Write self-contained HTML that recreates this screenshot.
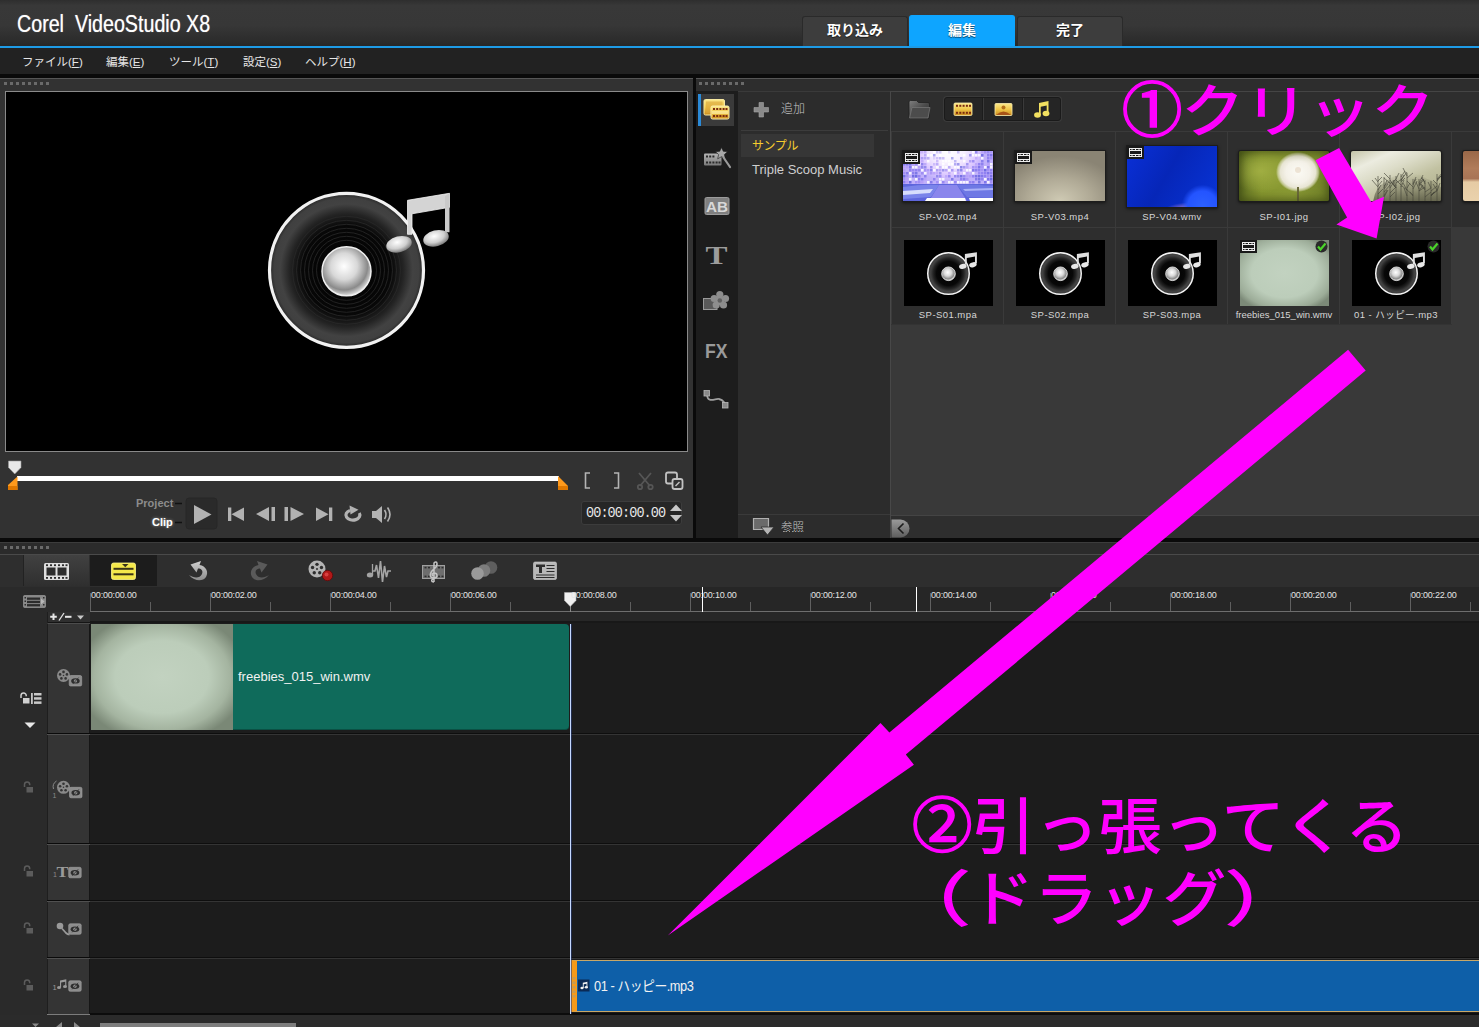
<!DOCTYPE html>
<html lang="ja">
<head>
<meta charset="utf-8">
<title>Corel VideoStudio X8</title>
<style>
*{box-sizing:border-box;margin:0;padding:0}
html,body{width:1479px;height:1027px;overflow:hidden;background:#2b2b2b}
body{font-family:"Liberation Sans","Noto Sans CJK JP",sans-serif;color:#ddd;position:relative}
.abs{position:absolute}
#app{position:absolute;left:0;top:0;width:1479px;height:1027px;overflow:hidden;background:#2b2b2b}
/* title bar */
#title{left:0;top:0;width:1479px;height:46px;background:linear-gradient(#2e2e2e 0,#383838 12%,#373737 55%,#2c2c2c 88%,#272727 100%)}
#title .name{left:17px;top:11px;font-size:23px;color:#fff;white-space:nowrap;transform-origin:0 0;transform:scaleX(.855);letter-spacing:0;text-shadow:0 0 1px rgba(255,255,255,.6)}
#blue{left:0;top:46px;width:1479px;height:2px;background:#1e9be6}
.tab{top:16px;height:30px;width:106px;background:#3d3d3d;color:#fff;font-weight:bold;font-size:14px;text-align:center;line-height:27px;text-shadow:0 1px 1px rgba(0,0,0,.6);border-radius:3px 3px 0 0;border:1px solid #2a2a2a;border-bottom:none}
.tab.on{background:#0ea5ff;border-color:#0ea5ff;top:15px;height:32px;line-height:29px}
#menu{left:0;top:48px;width:1479px;height:26px;background:#222}
#menu span{position:absolute;top:5px;font-size:11.5px;color:#e6e6e6;white-space:nowrap}
#menu u{text-decoration:underline}
#bar1{left:0;top:74px;width:1479px;height:4px;background:#0a0a0a}
/* grip dots */
.grip{height:3px;width:46px;background:repeating-linear-gradient(to right,#6a6a6a 0,#6a6a6a 3px,transparent 3px,transparent 6px)}

/* preview panel */
#pv{left:0;top:78px;width:693px;height:460px;background:#323232;border-top:1px solid #565656}
#pvscreen{left:5px;top:91px;width:683px;height:361px;background:#000;border:1px solid #8a8a8a}
#vdiv{left:693px;top:78px;width:3px;height:460px;background:#0a0a0a}
#bar2{left:0;top:538px;width:1479px;height:4px;background:#0a0a0a}
#scrub{left:17px;top:476px;width:541.500px;height:5px;background:#fff}
.tc{left:581px;top:501px;width:101px;height:24px;background:#262626;border:1px solid #3c3c3c;border-radius:3px}
.tc span{position:absolute;left:4px;top:3px;font-family:"Liberation Mono",monospace;font-size:15px;color:#e8e8e8;letter-spacing:-1px;white-space:nowrap;transform-origin:0 0;transform:scaleX(.9)}
.pl{font-weight:bold;font-size:11px;white-space:nowrap}

/* library */
#lib{left:696px;top:78px;width:783px;height:460px;background:#2d2d2d;border-top:1px solid #565656}
#libicons{left:696px;top:91px;width:42px;height:447px;background:#1d1d1d}
#libsel{left:698px;top:94px;width:36px;height:32px;background:#3a3a3a;border-left:3px solid #2a8ad8}
#folders{left:738px;top:91px;width:152px;height:447px;background:#2c2c2c;border-top:1px solid #3a3a3a}
#fsep{left:741px;top:130px;width:147px;height:1px;background:#3c3c3c}
#frow{left:741px;top:134px;width:133px;height:23px;background:#363636}
.ft{font-size:12.5px;white-space:nowrap;color:#cfcfcf}
#fbot{left:738px;top:514px;width:152px;height:1px;background:#3a3a3a}
#content{left:890px;top:91px;width:589px;height:447px;background:#393939;border-left:1px solid #484848;border-top:1px solid #454545}
#ctool{left:891px;top:92px;width:588px;height:39px;background:#2e2e2e}
#cbot{left:891px;top:515px;width:588px;height:23px;background:#2e2e2e;border-top:1px solid #444}
.cell{position:absolute;width:112px;background:#2e2e2e;border-left:1px solid #3a3a3a;border-top:1px solid #3a3a3a}
.cell .lb{line-height:12px;position:absolute;left:0;width:112px;text-align:center;font-size:9.5px;color:#d6d6d6;white-space:nowrap;letter-spacing:.45px}
.th{position:absolute;left:10.500px;width:90.500px;height:50px;box-shadow:0 0 0 1px #1c1c1c,0 1px 3px 1px rgba(0,0,0,.55);overflow:hidden}
.th2{position:absolute;left:11.500px;top:11.500px;width:89px;height:66.500px;background:#000;overflow:hidden}
.bgrp{left:944px;top:97px;width:117px;height:24px;background:#252525;border:1px solid #1a1a1a;border-radius:3px;box-shadow:0 0 0 1px #3a3a3a}

/* timeline */
#tl{left:0;top:542px;width:1479px;height:485px;background:#2b2b2b;border-top:1px solid #3c3c3c}
#tlline{left:0;top:554px;width:1479px;height:1px;background:#4a4a4a}
#tb1{left:23px;top:555px;width:66px;height:31px;background:linear-gradient(#414141,#2f2f2f);border-left:1px solid #222}
#tb2{left:90px;top:555px;width:67px;height:31px;background:#1c1c1c}
#tbbg{left:0;top:555px;width:1479px;height:32px;background:#2e2e2e}
#ruler{left:90px;top:587px;width:1389px;height:25px;background:#262626;border-bottom:1px solid #6e6e6e}
#rulerL{left:0;top:587px;width:90px;height:25px;background:#2a2a2a}
#ticks{left:90px;top:593px;width:1389px;height:18px;background:repeating-linear-gradient(to right,#606060 0,#606060 1px,transparent 1px,transparent 120px)}
#ticks2{left:150px;top:602px;width:1329px;height:9px;background:repeating-linear-gradient(to right,#5e5e5e 0,#5e5e5e 1px,transparent 1px,transparent 120px)}
.rt{position:absolute;top:590px;font-size:9px;color:#e4e4e4;white-space:nowrap;letter-spacing:-.18px}
#leftcol{left:0;top:612px;width:47px;height:403px;background:#2a2a2a}
#hdcol{left:47px;top:624px;width:43px;height:390px;background:#343434;border-left:1px solid #1e1e1e;border-right:1px solid #161616}
#pm{left:47px;top:612px;width:43px;height:12px;background:#2f2f2f;border-left:1px solid #1e1e1e;border-bottom:1px solid #4c4c4c;box-shadow:inset 0 -1px 0 #151515}
#strip{left:90px;top:612px;width:1389px;height:12px;background:#272727;border-bottom:3px solid #181818}
#tracks{left:90px;top:623px;width:1389px;height:391px;background:#1c1c1c;border-bottom:1px solid #0c0c0c}
.tdiv{position:absolute;left:47px;width:1432px;height:2px;background:linear-gradient(to right,#0a0a0a 0,#0a0a0a 43px,#0e0e0e 43px) top/100% 1px no-repeat,linear-gradient(to right,#505050 0,#505050 43px,#343434 43px) bottom/100% 1px no-repeat}
#bot{left:0;top:1014px;width:1479px;height:13px;background:linear-gradient(to right,#2a2a2a 0,#2a2a2a 47px,#7c7c7c 47px,#7c7c7c 90px,#0c0c0c 90px) top/100% 1px no-repeat,#2b2b2b}
#sb{left:100px;top:1023px;width:196px;height:4px;background:#7e7e7e}
#clipth{left:91px;top:624px;width:142px;height:106px;background:radial-gradient(ellipse 60% 62% at 50% 50%,#c2d2c0 0,#bccdba 55%,#a4b4a0 80%,#7a8876 100%)}
#clipg{left:233px;top:624px;width:336px;height:106px;background:#0f6b5b;border-radius:0 4px 4px 0;border-bottom:1px solid #0a5044}
#clipg span{position:absolute;left:5px;top:45px;font-size:13px;color:#f2f2f2;white-space:nowrap}
#aud{left:571px;top:960px;width:910px;height:52px;background:#0e5fa8;border-top:1px solid #c8a868;border-bottom:1px solid #c8a868;border-left:6px solid #f59a1a}
#aud span{position:absolute;left:17px;top:13.500px;font-size:14px;color:#f2f2f2;white-space:nowrap;letter-spacing:-.5px;transform-origin:0 50%;transform:scaleX(.915)}
#ph{left:570px;top:624px;width:1px;height:390px;background:#c4d8ff;box-shadow:1px 0 0 rgba(40,60,120,.55)}
.mk{position:absolute;top:587px;width:1px;height:25px;background:#fff}

.ann{position:absolute;color:#ff00ff;font-family:"Noto Sans CJK JP",sans-serif;font-weight:500;font-size:61px;white-space:nowrap;line-height:73px}
.circ{position:absolute;width:51px;height:51px;border-radius:50%;overflow:hidden}
.circ span{position:absolute;left:-10.800px;top:-15.900px;font-size:72px;line-height:73px;color:#ff00ff;font-weight:500;font-family:"Noto Sans CJK JP",sans-serif;white-space:nowrap}
</style>
</head>
<body>
<div id="app">
<!-- TITLE -->
<div id="title" class="abs"><div class="name abs">Corel&nbsp; VideoStudio X8</div></div>
<div class="tab abs" style="left:802px">取り込み</div>
<div class="tab on abs" style="left:909px">編集</div>
<div class="tab abs" style="left:1017px">完了</div>
<div id="blue" class="abs"></div>
<div id="menu" class="abs">
<span style="left:22px">ファイル(<u>F</u>)</span>
<span style="left:106px">編集(<u>E</u>)</span>
<span style="left:169px">ツール(<u>T</u>)</span>
<span style="left:243px">設定(<u>S</u>)</span>
<span style="left:305px">ヘルプ(<u>H</u>)</span>
</div>
<div id="bar1" class="abs"></div>
<!--PREVIEW-->
<div id="pv" class="abs"></div>
<div class="grip abs" style="left:4px;top:82px"></div>
<div id="pvscreen" class="abs"></div>
<svg class="abs" style="left:5px;top:91px" width="683" height="361" viewBox="5 91 683 361">
<defs>
<radialGradient id="spk" cx="50%" cy="50%" r="50%"><stop offset="0" stop-color="#000"/><stop offset=".58" stop-color="#080808"/><stop offset=".74" stop-color="#242424"/><stop offset=".86" stop-color="#424242"/><stop offset=".94" stop-color="#404040"/><stop offset="1" stop-color="#262626"/></radialGradient>
<radialGradient id="ball" cx="45%" cy="40%" r="60%"><stop offset="0" stop-color="#fff"/><stop offset=".45" stop-color="#d8d8d8"/><stop offset=".8" stop-color="#8a8a8a"/><stop offset="1" stop-color="#e0e0e0"/></radialGradient>
<radialGradient id="nh" cx="45%" cy="35%" r="65%"><stop offset="0" stop-color="#fff"/><stop offset=".6" stop-color="#cfcfcf"/><stop offset="1" stop-color="#777"/></radialGradient>
<g id="speaker">
<circle cx="0" cy="0" r="77" fill="url(#spk)" stroke="#f2f2f2" stroke-width="3.2"/>
<g fill="none" stroke="#2a2a2a" stroke-width=".8"><circle r="30"/><circle r="34"/><circle r="38"/><circle r="42"/><circle r="46"/><circle r="50"/><circle r="54"/></g>
<circle cx="0" cy="1" r="24.5" fill="url(#ball)" stroke="#efefef" stroke-width="1.5"/>
<path d="M61 -70 L103 -77 L103 -63 L65.500 -56.500 L65.500 -36 L61 -36 Z" fill="#d4d4d4" stroke="#f4f4f4" stroke-width=".8"/>
<path d="M98.500 -74 L103 -77 L103 -38 L98.500 -38 Z" fill="#c9c9c9"/>
<ellipse cx="52.500" cy="-26" rx="13" ry="8" transform="rotate(-14 52.500 -26)" fill="url(#nh)"/>
<ellipse cx="89.500" cy="-32" rx="13" ry="8" transform="rotate(-14 89.500 -32)" fill="url(#nh)"/>
</g>
<g id="speakers">
<circle cx="0" cy="0" r="76" fill="url(#spk)" stroke="#f4f4f4" stroke-width="5.500"/>
<circle cx="0" cy="1" r="25" fill="url(#ball)" stroke="#f4f4f4" stroke-width="3"/>
<path d="M60 -71 L104 -78 L104 -38 L97 -38 L97 -62 L67 -56.500 L67 -34 L60 -34 Z" fill="#e0e0e0"/>
<ellipse cx="52.500" cy="-26" rx="14" ry="9" transform="rotate(-14 52.500 -26)" fill="#e8e8e8"/>
<ellipse cx="89.500" cy="-32" rx="14" ry="9" transform="rotate(-14 89.500 -32)" fill="#e8e8e8"/>
</g>
</defs>
<use href="#speaker" x="346.500" y="270.300"/>
</svg>
<!-- scrubber -->
<div id="scrub" class="abs"></div>
<svg class="abs" style="left:0;top:455px" width="693" height="83" viewBox="0 455 693 83">
<path d="M8.500 461 H21 V467.500 L14.750 474 L8.500 467.500 Z" fill="#e8e8e8" stroke="#9a9a9a" stroke-width=".6"/>
<path d="M17.500 476.500 L8 485 V490 H17.500 Z" fill="#ff9a1c"/><path d="M8 486 h9.500 v4 h-9.500z" fill="#e07800"/>
<path d="M568 490 V486 L558 476 V490 Z" fill="#ff9a1c"/><path d="M558 486 h10 v4 h-10z" fill="#e07800"/>
<!-- brackets -->
<g fill="none" stroke="#b4b4b4" stroke-width="1.6"><path d="M590 473 H585.500 V488 H590"/><path d="M614 473 H618.500 V488 H614"/></g>
<!-- scissors (disabled) -->
<g fill="none" stroke="#565656" stroke-width="1.8"><path d="M639 473 L650 486 M651 473 L640 486"/><circle cx="640" cy="487" r="2.200"/><circle cx="650.500" cy="487" r="2.200"/></g>
<!-- copy -->
<g fill="none" stroke="#c2c2c2" stroke-width="1.8"><rect x="666" y="472.500" width="11" height="11" rx="2"/><rect x="672.500" y="479" width="10" height="10" rx="2" fill="#323232"/><path d="M675.500 486 L679.500 482" stroke-width="1.500"/></g>
<!-- transport -->
<rect x="186" y="498" width="31" height="31" rx="3" fill="#2a2a2a" stroke="#272727"/>
<g fill="#b2b2b2">
<path d="M194 505 L211.500 514.500 L194 524 Z"/>
<path d="M228 507.500 h3.300 v13.500 h-3.300z M244 507.500 v13.500 l-12.500 -6.750z"/>
<path d="M256 514 l13 -7 v14z M271.500 507 h3.500 v14 h-3.500z"/>
<path d="M284.500 507 h3.500 v14 h-3.500z M290.500 507 l13.500 7 l-13.500 7z"/>
<path d="M316 507.500 l12.500 6.750 l-12.500 6.750z M329 507.500 h3.300 v13.500 h-3.300z"/>
<path d="M372 511 h4 l6 -5 v17 l-6 -5 h-4z"/>
</g>
<g fill="none" stroke="#b2b2b2" stroke-width="3.200"><path d="M350 510.500 A7 5 0 1 0 359.300 513"/></g>
<path d="M349.500 505.500 L358.500 509.800 L350.500 514.500 Z" fill="#b2b2b2"/>
<g fill="none" stroke="#b2b2b2" stroke-width="1.600"><path d="M384.500 510 q3 4.500 0 9"/><path d="M387.500 507.500 q5 7 0 14"/></g>
<g stroke="#111" stroke-width="1.600"><path d="M175 503.500 h7 M175 522.500 h7"/></g>
</svg>
<div class="pl abs" style="left:136px;top:497px;color:#8c8c8c">Project</div>
<div class="pl abs" style="left:152px;top:516px;color:#fff;text-shadow:0 0 3px rgba(255,255,255,.5)">Clip</div>
<div class="tc abs"><span>00:00:00.00</span></div>
<svg class="abs" style="left:668.500px;top:503px" width="14" height="20"><path d="M1 8 L7 1.500 L13 8 Z M1 12 L7 18.500 L13 12 Z" fill="#c6c6c6"/></svg>
<div id="vdiv" class="abs"></div>
<div id="bar2" class="abs"></div>

<!--LIBRARY-->
<div id="lib" class="abs"></div>
<div class="grip abs" style="left:699px;top:82px"></div>
<div id="libicons" class="abs"></div>
<div id="libsel" class="abs"></div>
<div id="folders" class="abs"></div>
<div id="fsep" class="abs"></div>
<div id="frow" class="abs"></div>
<div class="ft abs" style="left:752px;top:135.500px;color:#f6cd2e;font-size:12px;font-weight:400;letter-spacing:-.4px">サンプル</div>
<div class="ft abs" style="left:752px;top:162px;font-size:13px">Triple Scoop Music</div>
<div class="ft abs" style="left:781px;top:99px;font-size:12px;color:#c4c4c4;font-weight:300">追加</div>
<div class="ft abs" style="left:781px;top:517.500px;font-size:11.500px;color:#c4c4c4;font-weight:300">参照</div><div class="abs" style="left:783px;top:531px;width:20px;height:1px;background:repeating-linear-gradient(to right,#9a9a9a 0,#9a9a9a 1px,transparent 1px,transparent 3px)"></div>
<div id="fbot" class="abs"></div>
<div id="content" class="abs"></div>
<div id="ctool" class="abs"></div>
<div class="bgrp abs"></div>
<div class="cell" style="left:891px;top:131px;height:96px"><div class="th" style="top:18.500px;background:radial-gradient(ellipse 36px 30px at 50% 0,#fff 0,#f6eeff 45%,#dcc8ff 80%,#c0b0fa 100%)"><svg style="position:absolute;left:0;top:0" width="91" height="50" viewBox="0 0 91 50"><rect x="0" y="0" width="2.500" height="2.500" fill="#7a70e8" opacity="0.82"/><rect x="3" y="0" width="2.500" height="2.500" fill="#b49cf8" opacity="0.68"/><rect x="9" y="0" width="2.500" height="2.500" fill="#fff" opacity=".85"/><rect x="12" y="0" width="2.500" height="2.500" fill="#8c7cf0" opacity="0.66"/><rect x="15" y="0" width="2.500" height="2.500" fill="#8c7cf0" opacity="0.66"/><rect x="18" y="0" width="2.500" height="2.500" fill="#b49cf8" opacity="0.49"/><rect x="21" y="0" width="2.500" height="2.500" fill="#b49cf8" opacity="0.69"/><rect x="30" y="0" width="2.500" height="2.500" fill="#fff" opacity=".85"/><rect x="33" y="0" width="2.500" height="2.500" fill="#7a70e8" opacity="0.33"/><rect x="36" y="0" width="2.500" height="2.500" fill="#8c7cf0" opacity="0.38"/><rect x="45" y="0" width="2.500" height="2.500" fill="#b49cf8" opacity="0.33"/><rect x="54" y="0" width="2.500" height="2.500" fill="#8c7cf0" opacity="0.43"/><rect x="69" y="0" width="2.500" height="2.500" fill="#fff" opacity=".85"/><rect x="72" y="0" width="2.500" height="2.500" fill="#7a70e8" opacity="0.73"/><rect x="78" y="0" width="2.500" height="2.500" fill="#b49cf8" opacity="0.66"/><rect x="81" y="0" width="2.500" height="2.500" fill="#a08cf4" opacity="0.83"/><rect x="84" y="0" width="2.500" height="2.500" fill="#8c7cf0" opacity="0.69"/><rect x="87" y="0" width="2.500" height="2.500" fill="#a08cf4" opacity="0.74"/><rect x="90" y="0" width="2.500" height="2.500" fill="#8c7cf0" opacity="0.95"/><rect x="0" y="3" width="2.500" height="2.500" fill="#b49cf8" opacity="0.87"/><rect x="3" y="3" width="2.500" height="2.500" fill="#fff" opacity=".85"/><rect x="6" y="3" width="2.500" height="2.500" fill="#a08cf4" opacity="0.80"/><rect x="12" y="3" width="2.500" height="2.500" fill="#8c7cf0" opacity="0.82"/><rect x="21" y="3" width="2.500" height="2.500" fill="#a08cf4" opacity="0.61"/><rect x="24" y="3" width="2.500" height="2.500" fill="#fff" opacity=".85"/><rect x="27" y="3" width="2.500" height="2.500" fill="#fff" opacity=".85"/><rect x="30" y="3" width="2.500" height="2.500" fill="#6a68e0" opacity="0.57"/><rect x="36" y="3" width="2.500" height="2.500" fill="#fff" opacity=".85"/><rect x="60" y="3" width="2.500" height="2.500" fill="#fff" opacity=".85"/><rect x="66" y="3" width="2.500" height="2.500" fill="#6a68e0" opacity="0.58"/><rect x="69" y="3" width="2.500" height="2.500" fill="#fff" opacity=".85"/><rect x="72" y="3" width="2.500" height="2.500" fill="#fff" opacity=".85"/><rect x="75" y="3" width="2.500" height="2.500" fill="#fff" opacity=".85"/><rect x="78" y="3" width="2.500" height="2.500" fill="#6a68e0" opacity="0.88"/><rect x="84" y="3" width="2.500" height="2.500" fill="#7a70e8" opacity="0.71"/><rect x="87" y="3" width="2.500" height="2.500" fill="#7a70e8" opacity="0.90"/><rect x="90" y="3" width="2.500" height="2.500" fill="#b49cf8" opacity="0.80"/><rect x="0" y="6" width="2.500" height="2.500" fill="#7a70e8" opacity="0.84"/><rect x="3" y="6" width="2.500" height="2.500" fill="#b49cf8" opacity="0.77"/><rect x="6" y="6" width="2.500" height="2.500" fill="#b49cf8" opacity="0.92"/><rect x="15" y="6" width="2.500" height="2.500" fill="#b49cf8" opacity="0.63"/><rect x="18" y="6" width="2.500" height="2.500" fill="#8c7cf0" opacity="0.62"/><rect x="21" y="6" width="2.500" height="2.500" fill="#7a70e8" opacity="0.46"/><rect x="24" y="6" width="2.500" height="2.500" fill="#7a70e8" opacity="0.43"/><rect x="30" y="6" width="2.500" height="2.500" fill="#b49cf8" opacity="0.37"/><rect x="33" y="6" width="2.500" height="2.500" fill="#a08cf4" opacity="0.48"/><rect x="36" y="6" width="2.500" height="2.500" fill="#7a70e8" opacity="0.45"/><rect x="39" y="6" width="2.500" height="2.500" fill="#a08cf4" opacity="0.53"/><rect x="48" y="6" width="2.500" height="2.500" fill="#6a68e0" opacity="0.54"/><rect x="57" y="6" width="2.500" height="2.500" fill="#8c7cf0" opacity="0.55"/><rect x="72" y="6" width="2.500" height="2.500" fill="#b49cf8" opacity="0.62"/><rect x="78" y="6" width="2.500" height="2.500" fill="#fff" opacity=".85"/><rect x="84" y="6" width="2.500" height="2.500" fill="#8c7cf0" opacity="0.88"/><rect x="87" y="6" width="2.500" height="2.500" fill="#a08cf4" opacity="0.95"/><rect x="90" y="6" width="2.500" height="2.500" fill="#7a70e8" opacity="0.91"/><rect x="3" y="9" width="2.500" height="2.500" fill="#7a70e8" opacity="0.87"/><rect x="12" y="9" width="2.500" height="2.500" fill="#7a70e8" opacity="0.82"/><rect x="18" y="9" width="2.500" height="2.500" fill="#b49cf8" opacity="0.64"/><rect x="24" y="9" width="2.500" height="2.500" fill="#fff" opacity=".85"/><rect x="33" y="9" width="2.500" height="2.500" fill="#b49cf8" opacity="0.62"/><rect x="39" y="9" width="2.500" height="2.500" fill="#fff" opacity=".85"/><rect x="42" y="9" width="2.500" height="2.500" fill="#fff" opacity=".85"/><rect x="45" y="9" width="2.500" height="2.500" fill="#fff" opacity=".85"/><rect x="51" y="9" width="2.500" height="2.500" fill="#7a70e8" opacity="0.45"/><rect x="60" y="9" width="2.500" height="2.500" fill="#fff" opacity=".85"/><rect x="66" y="9" width="2.500" height="2.500" fill="#a08cf4" opacity="0.70"/><rect x="69" y="9" width="2.500" height="2.500" fill="#8c7cf0" opacity="0.77"/><rect x="78" y="9" width="2.500" height="2.500" fill="#7a70e8" opacity="0.74"/><rect x="84" y="9" width="2.500" height="2.500" fill="#6a68e0" opacity="0.82"/><rect x="90" y="9" width="2.500" height="2.500" fill="#7a70e8" opacity="0.81"/><rect x="0" y="12" width="2.500" height="2.500" fill="#7a70e8" opacity="0.92"/><rect x="3" y="12" width="2.500" height="2.500" fill="#7a70e8" opacity="0.89"/><rect x="6" y="12" width="2.500" height="2.500" fill="#6a68e0" opacity="0.86"/><rect x="9" y="12" width="2.500" height="2.500" fill="#b49cf8" opacity="0.79"/><rect x="12" y="12" width="2.500" height="2.500" fill="#8c7cf0" opacity="0.75"/><rect x="15" y="12" width="2.500" height="2.500" fill="#fff" opacity=".85"/><rect x="18" y="12" width="2.500" height="2.500" fill="#7a70e8" opacity="0.77"/><rect x="21" y="12" width="2.500" height="2.500" fill="#a08cf4" opacity="0.55"/><rect x="30" y="12" width="2.500" height="2.500" fill="#b49cf8" opacity="0.53"/><rect x="33" y="12" width="2.500" height="2.500" fill="#a08cf4" opacity="0.65"/><rect x="39" y="12" width="2.500" height="2.500" fill="#fff" opacity=".85"/><rect x="45" y="12" width="2.500" height="2.500" fill="#fff" opacity=".85"/><rect x="48" y="12" width="2.500" height="2.500" fill="#fff" opacity=".85"/><rect x="51" y="12" width="2.500" height="2.500" fill="#7a70e8" opacity="0.52"/><rect x="54" y="12" width="2.500" height="2.500" fill="#6a68e0" opacity="0.61"/><rect x="63" y="12" width="2.500" height="2.500" fill="#7a70e8" opacity="0.60"/><rect x="72" y="12" width="2.500" height="2.500" fill="#b49cf8" opacity="0.72"/><rect x="75" y="12" width="2.500" height="2.500" fill="#8c7cf0" opacity="0.86"/><rect x="78" y="12" width="2.500" height="2.500" fill="#7a70e8" opacity="0.71"/><rect x="84" y="12" width="2.500" height="2.500" fill="#b49cf8" opacity="0.71"/><rect x="87" y="12" width="2.500" height="2.500" fill="#fff" opacity=".85"/><rect x="90" y="12" width="2.500" height="2.500" fill="#a08cf4" opacity="0.95"/><rect x="0" y="15" width="2.500" height="2.500" fill="#b49cf8" opacity="0.82"/><rect x="3" y="15" width="2.500" height="2.500" fill="#b49cf8" opacity="0.89"/><rect x="6" y="15" width="2.500" height="2.500" fill="#7a70e8" opacity="0.90"/><rect x="9" y="15" width="2.500" height="2.500" fill="#fff" opacity=".85"/><rect x="12" y="15" width="2.500" height="2.500" fill="#fff" opacity=".85"/><rect x="15" y="15" width="2.500" height="2.500" fill="#b49cf8" opacity="0.85"/><rect x="18" y="15" width="2.500" height="2.500" fill="#6a68e0" opacity="0.60"/><rect x="21" y="15" width="2.500" height="2.500" fill="#6a68e0" opacity="0.62"/><rect x="27" y="15" width="2.500" height="2.500" fill="#7a70e8" opacity="0.67"/><rect x="33" y="15" width="2.500" height="2.500" fill="#fff" opacity=".85"/><rect x="36" y="15" width="2.500" height="2.500" fill="#a08cf4" opacity="0.45"/><rect x="39" y="15" width="2.500" height="2.500" fill="#fff" opacity=".85"/><rect x="42" y="15" width="2.500" height="2.500" fill="#fff" opacity=".85"/><rect x="45" y="15" width="2.500" height="2.500" fill="#8c7cf0" opacity="0.51"/><rect x="51" y="15" width="2.500" height="2.500" fill="#fff" opacity=".85"/><rect x="54" y="15" width="2.500" height="2.500" fill="#fff" opacity=".85"/><rect x="57" y="15" width="2.500" height="2.500" fill="#6a68e0" opacity="0.74"/><rect x="60" y="15" width="2.500" height="2.500" fill="#6a68e0" opacity="0.53"/><rect x="63" y="15" width="2.500" height="2.500" fill="#a08cf4" opacity="0.50"/><rect x="69" y="15" width="2.500" height="2.500" fill="#8c7cf0" opacity="0.67"/><rect x="72" y="15" width="2.500" height="2.500" fill="#a08cf4" opacity="0.74"/><rect x="75" y="15" width="2.500" height="2.500" fill="#7a70e8" opacity="0.91"/><rect x="78" y="15" width="2.500" height="2.500" fill="#a08cf4" opacity="0.74"/><rect x="81" y="15" width="2.500" height="2.500" fill="#fff" opacity=".85"/><rect x="84" y="15" width="2.500" height="2.500" fill="#7a70e8" opacity="0.95"/><rect x="87" y="15" width="2.500" height="2.500" fill="#fff" opacity=".85"/><rect x="90" y="15" width="2.500" height="2.500" fill="#a08cf4" opacity="0.92"/><rect x="0" y="18" width="2.500" height="2.500" fill="#b49cf8" opacity="0.95"/><rect x="6" y="18" width="2.500" height="2.500" fill="#8c7cf0" opacity="0.95"/><rect x="9" y="18" width="2.500" height="2.500" fill="#8c7cf0" opacity="0.77"/><rect x="12" y="18" width="2.500" height="2.500" fill="#8c7cf0" opacity="0.89"/><rect x="15" y="18" width="2.500" height="2.500" fill="#7a70e8" opacity="0.64"/><rect x="18" y="18" width="2.500" height="2.500" fill="#fff" opacity=".85"/><rect x="21" y="18" width="2.500" height="2.500" fill="#a08cf4" opacity="0.86"/><rect x="24" y="18" width="2.500" height="2.500" fill="#a08cf4" opacity="0.72"/><rect x="27" y="18" width="2.500" height="2.500" fill="#7a70e8" opacity="0.79"/><rect x="30" y="18" width="2.500" height="2.500" fill="#fff" opacity=".85"/><rect x="33" y="18" width="2.500" height="2.500" fill="#7a70e8" opacity="0.53"/><rect x="36" y="18" width="2.500" height="2.500" fill="#a08cf4" opacity="0.62"/><rect x="39" y="18" width="2.500" height="2.500" fill="#6a68e0" opacity="0.60"/><rect x="42" y="18" width="2.500" height="2.500" fill="#a08cf4" opacity="0.69"/><rect x="45" y="18" width="2.500" height="2.500" fill="#fff" opacity=".85"/><rect x="48" y="18" width="2.500" height="2.500" fill="#8c7cf0" opacity="0.67"/><rect x="54" y="18" width="2.500" height="2.500" fill="#6a68e0" opacity="0.55"/><rect x="57" y="18" width="2.500" height="2.500" fill="#6a68e0" opacity="0.69"/><rect x="63" y="18" width="2.500" height="2.500" fill="#fff" opacity=".85"/><rect x="66" y="18" width="2.500" height="2.500" fill="#fff" opacity=".85"/><rect x="69" y="18" width="2.500" height="2.500" fill="#7a70e8" opacity="0.88"/><rect x="72" y="18" width="2.500" height="2.500" fill="#7a70e8" opacity="0.74"/><rect x="75" y="18" width="2.500" height="2.500" fill="#8c7cf0" opacity="0.90"/><rect x="78" y="18" width="2.500" height="2.500" fill="#a08cf4" opacity="0.81"/><rect x="81" y="18" width="2.500" height="2.500" fill="#6a68e0" opacity="0.95"/><rect x="84" y="18" width="2.500" height="2.500" fill="#a08cf4" opacity="0.93"/><rect x="87" y="18" width="2.500" height="2.500" fill="#8c7cf0" opacity="0.93"/><rect x="90" y="18" width="2.500" height="2.500" fill="#6a68e0" opacity="0.82"/><rect x="0" y="21" width="2.500" height="2.500" fill="#a08cf4" opacity="0.95"/><rect x="3" y="21" width="2.500" height="2.500" fill="#7a70e8" opacity="0.79"/><rect x="6" y="21" width="2.500" height="2.500" fill="#fff" opacity=".85"/><rect x="9" y="21" width="2.500" height="2.500" fill="#7a70e8" opacity="0.72"/><rect x="12" y="21" width="2.500" height="2.500" fill="#6a68e0" opacity="0.77"/><rect x="18" y="21" width="2.500" height="2.500" fill="#8c7cf0" opacity="0.66"/><rect x="21" y="21" width="2.500" height="2.500" fill="#fff" opacity=".85"/><rect x="24" y="21" width="2.500" height="2.500" fill="#b49cf8" opacity="0.59"/><rect x="27" y="21" width="2.500" height="2.500" fill="#a08cf4" opacity="0.75"/><rect x="30" y="21" width="2.500" height="2.500" fill="#b49cf8" opacity="0.79"/><rect x="33" y="21" width="2.500" height="2.500" fill="#b49cf8" opacity="0.64"/><rect x="36" y="21" width="2.500" height="2.500" fill="#6a68e0" opacity="0.55"/><rect x="45" y="21" width="2.500" height="2.500" fill="#b49cf8" opacity="0.69"/><rect x="51" y="21" width="2.500" height="2.500" fill="#fff" opacity=".85"/><rect x="54" y="21" width="2.500" height="2.500" fill="#b49cf8" opacity="0.75"/><rect x="60" y="21" width="2.500" height="2.500" fill="#fff" opacity=".85"/><rect x="63" y="21" width="2.500" height="2.500" fill="#b49cf8" opacity="0.82"/><rect x="69" y="21" width="2.500" height="2.500" fill="#fff" opacity=".85"/><rect x="75" y="21" width="2.500" height="2.500" fill="#8c7cf0" opacity="0.73"/><rect x="78" y="21" width="2.500" height="2.500" fill="#8c7cf0" opacity="0.83"/><rect x="81" y="21" width="2.500" height="2.500" fill="#8c7cf0" opacity="0.94"/><rect x="84" y="21" width="2.500" height="2.500" fill="#7a70e8" opacity="0.93"/><rect x="87" y="21" width="2.500" height="2.500" fill="#8c7cf0" opacity="0.95"/><rect x="90" y="21" width="2.500" height="2.500" fill="#b49cf8" opacity="0.88"/><rect x="0" y="24" width="2.500" height="2.500" fill="#6a68e0" opacity="0.92"/><rect x="3" y="24" width="2.500" height="2.500" fill="#a08cf4" opacity="0.88"/><rect x="9" y="24" width="2.500" height="2.500" fill="#6a68e0" opacity="0.90"/><rect x="12" y="24" width="2.500" height="2.500" fill="#6a68e0" opacity="0.95"/><rect x="15" y="24" width="2.500" height="2.500" fill="#8c7cf0" opacity="0.88"/><rect x="21" y="24" width="2.500" height="2.500" fill="#7a70e8" opacity="0.74"/><rect x="33" y="24" width="2.500" height="2.500" fill="#6a68e0" opacity="0.59"/><rect x="36" y="24" width="2.500" height="2.500" fill="#8c7cf0" opacity="0.77"/><rect x="42" y="24" width="2.500" height="2.500" fill="#b49cf8" opacity="0.64"/><rect x="45" y="24" width="2.500" height="2.500" fill="#8c7cf0" opacity="0.85"/><rect x="51" y="24" width="2.500" height="2.500" fill="#8c7cf0" opacity="0.84"/><rect x="54" y="24" width="2.500" height="2.500" fill="#6a68e0" opacity="0.59"/><rect x="57" y="24" width="2.500" height="2.500" fill="#6a68e0" opacity="0.88"/><rect x="60" y="24" width="2.500" height="2.500" fill="#7a70e8" opacity="0.63"/><rect x="63" y="24" width="2.500" height="2.500" fill="#b49cf8" opacity="0.70"/><rect x="66" y="24" width="2.500" height="2.500" fill="#b49cf8" opacity="0.89"/><rect x="69" y="24" width="2.500" height="2.500" fill="#8c7cf0" opacity="0.88"/><rect x="72" y="24" width="2.500" height="2.500" fill="#6a68e0" opacity="0.81"/><rect x="75" y="24" width="2.500" height="2.500" fill="#6a68e0" opacity="0.93"/><rect x="78" y="24" width="2.500" height="2.500" fill="#7a70e8" opacity="0.88"/><rect x="81" y="24" width="2.500" height="2.500" fill="#8c7cf0" opacity="0.95"/><rect x="84" y="24" width="2.500" height="2.500" fill="#a08cf4" opacity="0.95"/><rect x="87" y="24" width="2.500" height="2.500" fill="#7a70e8" opacity="0.95"/><rect x="90" y="24" width="2.500" height="2.500" fill="#fff" opacity=".85"/><rect x="0" y="27" width="2.500" height="2.500" fill="#a08cf4" opacity="0.90"/><rect x="3" y="27" width="2.500" height="2.500" fill="#b49cf8" opacity="0.87"/><rect x="6" y="27" width="2.500" height="2.500" fill="#fff" opacity=".85"/><rect x="12" y="27" width="2.500" height="2.500" fill="#fff" opacity=".85"/><rect x="15" y="27" width="2.500" height="2.500" fill="#8c7cf0" opacity="0.95"/><rect x="18" y="27" width="2.500" height="2.500" fill="#7a70e8" opacity="0.79"/><rect x="21" y="27" width="2.500" height="2.500" fill="#b49cf8" opacity="0.78"/><rect x="30" y="27" width="2.500" height="2.500" fill="#8c7cf0" opacity="0.88"/><rect x="36" y="27" width="2.500" height="2.500" fill="#fff" opacity=".85"/><rect x="39" y="27" width="2.500" height="2.500" fill="#fff" opacity=".85"/><rect x="48" y="27" width="2.500" height="2.500" fill="#6a68e0" opacity="0.74"/><rect x="57" y="27" width="2.500" height="2.500" fill="#8c7cf0" opacity="0.91"/><rect x="60" y="27" width="2.500" height="2.500" fill="#7a70e8" opacity="0.79"/><rect x="63" y="27" width="2.500" height="2.500" fill="#a08cf4" opacity="0.75"/><rect x="72" y="27" width="2.500" height="2.500" fill="#7a70e8" opacity="0.83"/><rect x="75" y="27" width="2.500" height="2.500" fill="#6a68e0" opacity="0.80"/><rect x="78" y="27" width="2.500" height="2.500" fill="#8c7cf0" opacity="0.85"/><rect x="81" y="27" width="2.500" height="2.500" fill="#fff" opacity=".85"/><rect x="84" y="27" width="2.500" height="2.500" fill="#7a70e8" opacity="0.95"/><rect x="87" y="27" width="2.500" height="2.500" fill="#6a68e0" opacity="0.95"/><rect x="90" y="27" width="2.500" height="2.500" fill="#7a70e8" opacity="0.94"/><rect x="0" y="30" width="2.500" height="2.500" fill="#8c7cf0" opacity="0.95"/><rect x="3" y="30" width="2.500" height="2.500" fill="#b49cf8" opacity="0.95"/><rect x="6" y="30" width="2.500" height="2.500" fill="#6a68e0" opacity="0.95"/><rect x="12" y="30" width="2.500" height="2.500" fill="#a08cf4" opacity="0.90"/><rect x="15" y="30" width="2.500" height="2.500" fill="#a08cf4" opacity="0.95"/><rect x="18" y="30" width="2.500" height="2.500" fill="#b49cf8" opacity="0.91"/><rect x="24" y="30" width="2.500" height="2.500" fill="#fff" opacity=".85"/><rect x="27" y="30" width="2.500" height="2.500" fill="#7a70e8" opacity="0.81"/><rect x="33" y="30" width="2.500" height="2.500" fill="#a08cf4" opacity="0.93"/><rect x="36" y="30" width="2.500" height="2.500" fill="#fff" opacity=".85"/><rect x="39" y="30" width="2.500" height="2.500" fill="#8c7cf0" opacity="0.79"/><rect x="45" y="30" width="2.500" height="2.500" fill="#fff" opacity=".85"/><rect x="48" y="30" width="2.500" height="2.500" fill="#fff" opacity=".85"/><rect x="51" y="30" width="2.500" height="2.500" fill="#8c7cf0" opacity="0.78"/><rect x="54" y="30" width="2.500" height="2.500" fill="#fff" opacity=".85"/><rect x="57" y="30" width="2.500" height="2.500" fill="#fff" opacity=".85"/><rect x="60" y="30" width="2.500" height="2.500" fill="#fff" opacity=".85"/><rect x="63" y="30" width="2.500" height="2.500" fill="#fff" opacity=".85"/><rect x="66" y="30" width="2.500" height="2.500" fill="#8c7cf0" opacity="0.80"/><rect x="69" y="30" width="2.500" height="2.500" fill="#8c7cf0" opacity="0.95"/><rect x="75" y="30" width="2.500" height="2.500" fill="#6a68e0" opacity="0.83"/><rect x="81" y="30" width="2.500" height="2.500" fill="#7a70e8" opacity="0.93"/><rect x="84" y="30" width="2.500" height="2.500" fill="#fff" opacity=".85"/><rect x="87" y="30" width="2.500" height="2.500" fill="#a08cf4" opacity="0.95"/><rect x="90" y="30" width="2.500" height="2.500" fill="#b49cf8" opacity="0.95"/><path d="M0 33H91V50H0Z" fill="#5e66dc"/><path d="M0 36 Q20 33 36 34 L28 46 L0 48Z" fill="#7a84ea"/><path d="M91 35 Q70 33 54 34 L64 46 L91 47Z" fill="#6e78e4"/><path d="M36 34 H54 L64 50 H26Z" fill="#8a86ec"/><path d="M0 40 L30 38 L27 42 L0 44Z" fill="#e8ecff" opacity=".85"/><path d="M24 47 H62 L63 50 H22Z M66 47 H91 V50 H67Z" fill="#fff"/><path d="M60 38 L91 37 V39 L62 40Z" fill="#c4caff" opacity=".7"/></svg><svg style="position:absolute;left:0;top:0" width="17" height="13" viewBox="0 0 17 13"><rect width="17" height="13" fill="#1a1a1a"/><rect x="2.500" y="2.500" width="12" height="8" fill="none" stroke="#eee" stroke-width="1"/><path d="M2.500 4.500h12M2.500 8.500h12" stroke="#eee" stroke-width="1"/><path d="M5 2.500v2M8.500 2.500v2M12 2.500v2M5 8.500v2M8.500 8.500v2M12 8.500v2" stroke="#eee" stroke-width="1"/></svg></div><div class="lb" style="top:79px">SP-V02.mp4</div></div>
<div class="cell" style="left:1003px;top:131px;height:96px"><div class="th" style="top:18.500px;background:radial-gradient(ellipse 70% 90% at 50% 100%,#cfcab4 0,#b0aa96 50%,#8a8474 100%)"><svg style="position:absolute;left:0;top:0" width="17" height="13" viewBox="0 0 17 13"><rect width="17" height="13" fill="#1a1a1a"/><rect x="2.500" y="2.500" width="12" height="8" fill="none" stroke="#eee" stroke-width="1"/><path d="M2.500 4.500h12M2.500 8.500h12" stroke="#eee" stroke-width="1"/><path d="M5 2.500v2M8.500 2.500v2M12 2.500v2M5 8.500v2M8.500 8.500v2M12 8.500v2" stroke="#eee" stroke-width="1"/></svg></div><div class="lb" style="top:79px">SP-V03.mp4</div></div>
<div class="cell" style="left:1115px;top:131px;height:96px"><div class="th" style="top:14px;height:61px;background:radial-gradient(circle 21px at 84% 98%,#2c60ff 0,#2454ff 70%,rgba(30,70,240,0) 100%),radial-gradient(ellipse 30px 8px at 75% 105%,#e8a0e0,rgba(0,0,0,0)),linear-gradient(120deg,#0a30d8 0,#0626b8 45%,#0834d6 100%)"><svg style="position:absolute;left:0;top:0" width="17" height="13" viewBox="0 0 17 13"><rect width="17" height="13" fill="#1a1a1a"/><rect x="2.500" y="2.500" width="12" height="8" fill="none" stroke="#eee" stroke-width="1"/><path d="M2.500 4.500h12M2.500 8.500h12" stroke="#eee" stroke-width="1"/><path d="M5 2.500v2M8.500 2.500v2M12 2.500v2M5 8.500v2M8.500 8.500v2M12 8.500v2" stroke="#eee" stroke-width="1"/></svg></div><div class="lb" style="top:79px">SP-V04.wmv</div></div>
<div class="cell" style="left:1227px;top:131px;height:96px"><div class="th" style="top:18.500px;border-radius:2px;background:radial-gradient(ellipse 22px 20px at 59px 21px,#fbfaf4 0,#f4f1e8 55%,#e8e5d4 80%,rgba(225,225,195,.6) 92%,rgba(200,205,140,0) 100%),radial-gradient(ellipse 30px 22px at 22px 20px,#a0ae42 0,rgba(150,165,60,0) 100%),linear-gradient(to right,#5e6e22 0,#86962f 25%,#8a9a34 60%,#6f7f28 100%)"><div style="position:absolute;left:58.500px;top:36px;width:1.500px;height:15px;background:#6b6a3a"></div><div style="position:absolute;left:56px;top:16px;width:6px;height:6px;border-radius:3px;background:#d9c2a8;opacity:.4"></div><div style="position:absolute;left:0;top:0;width:100%;height:100%;box-shadow:inset 0 0 8px 2px rgba(40,50,10,.55)"></div></div><div class="lb" style="top:79px">SP-I01.jpg</div></div>
<div class="cell" style="left:1339px;top:131px;height:96px"><div class="th" style="top:18.500px;border-radius:2px;background:linear-gradient(155deg,#c4c4a8 0,#ecece0 22%,#dcdcc8 40%,#c2c2a2 62%,#a8a884 100%)"><svg style="position:absolute;left:0;top:0" width="91" height="51" viewBox="0 0 91 51"><defs><linearGradient id="tg" x1="0" y1="0" x2="0" y2="1"><stop offset="0" stop-color="#55553f" stop-opacity="0"/><stop offset=".5" stop-color="#55553f" stop-opacity=".35"/><stop offset="1" stop-color="#4a4a38" stop-opacity=".75"/></linearGradient></defs><path d="M22 51 Q24 36 34 31 Q44 22 54 24 Q66 20 76 28 Q86 30 91 38 V51Z" fill="url(#tg)"/><path d="M27 51V25M27 36l-6 -7M27 31l-3 -4M27 39l3 -5M27 43l5 -5M27 30l4 -4M27 35l4 -5M33 51V26M33 37l3 -8M33 38l4 -5M33 35l5 -4M33 45l3 -6M33 46l4 -7M33 41l6 -7M39 51V24M39 33l5 -4M39 28l-6 -6M39 42l5 -5M39 32l-6 -5M39 46l5 -5M39 37l5 -8M45 51V25M45 37l-3 -5M45 35l-3 -6M45 32l6 -4M45 28l3 -6M45 37l-5 -6M45 37l-6 -8M50 51V23M50 34l-6 -6M50 29l6 -8M50 30l3 -6M50 26l4 -6M50 36l3 -7M50 31l4 -4M56 51V22M56 25l-4 -8M56 45l-3 -8M56 39l-5 -4M56 27l6 -5M56 39l-4 -7M56 37l3 -5M62 51V28M62 44l-6 -5M62 45l-3 -4M62 38l4 -8M62 36l-6 -6M62 34l3 -6M62 33l3 -7M68 51V28M68 32l4 -8M68 35l5 -7M68 40l4 -6M68 40l6 -4M68 38l-3 -7M68 34l3 -5M74 51V29M74 46l6 -5M74 31l-4 -4M74 39l-6 -7M74 38l-4 -5M74 41l6 -4M74 33l-3 -7M80 51V30M80 45l4 -4M80 37l-3 -6M80 45l3 -4M80 40l6 -5M80 44l6 -5M80 44l6 -4M86 51V23M86 28l6 -7M86 39l-4 -6M86 40l3 -8M86 30l4 -5M86 29l6 -6M86 33l-4 -4" stroke="#45453a" stroke-width=".8" fill="none" opacity=".8"/></svg></div><div class="lb" style="top:79px">SP-I02.jpg</div></div>
<div class="cell" style="left:1451px;top:131px;height:96px"><div class="th" style="top:18.500px;border-radius:2px;background:linear-gradient(to bottom,#9a6848 0,#b07c5a 35%,#a87456 55%,#e6cba4 62%,#ead2ac 100%)"></div><div class="lb" style="top:79px"></div></div>
<div class="cell" style="left:891px;top:227px;height:97px"><div class="th2"><svg style="position:absolute;left:0;top:0" width="89" height="67" viewBox="0 0 89 67"><use href="#speakers" transform="translate(44.500 33.500) scale(.273)"/></svg></div><div class="lb" style="top:81px">SP-S01.mpa</div></div>
<div class="cell" style="left:1003px;top:227px;height:97px"><div class="th2"><svg style="position:absolute;left:0;top:0" width="89" height="67" viewBox="0 0 89 67"><use href="#speakers" transform="translate(44.500 33.500) scale(.273)"/></svg></div><div class="lb" style="top:81px">SP-S02.mpa</div></div>
<div class="cell" style="left:1115px;top:227px;height:97px"><div class="th2"><svg style="position:absolute;left:0;top:0" width="89" height="67" viewBox="0 0 89 67"><use href="#speakers" transform="translate(44.500 33.500) scale(.273)"/></svg></div><div class="lb" style="top:81px">SP-S03.mpa</div></div>
<div class="cell" style="left:1227px;top:227px;height:97px"><div class="th2" style="background:radial-gradient(ellipse 62% 62% at 50% 50%,#c2d2c0 0,#bccdba 60%,#9cac98 88%,#7c8a78 100%)"><svg style="position:absolute;left:0;top:0" width="17" height="13" viewBox="0 0 17 13"><rect width="17" height="13" fill="#1a1a1a"/><rect x="2.500" y="2.500" width="12" height="8" fill="none" stroke="#eee" stroke-width="1"/><path d="M2.500 4.500h12M2.500 8.500h12" stroke="#eee" stroke-width="1"/><path d="M5 2.500v2M8.500 2.500v2M12 2.500v2M5 8.500v2M8.500 8.500v2M12 8.500v2" stroke="#eee" stroke-width="1"/></svg><svg style="position:absolute;right:1px;top:0" width="13" height="13" viewBox="0 0 13 13"><circle cx="6.500" cy="6.500" r="6" fill="#2a2a2a"/><path d="M3 6.500l2.500 3l5-6" fill="none" stroke="#4ad42a" stroke-width="2.200"/></svg></div><div class="lb" style="top:81px;letter-spacing:0">freebies_015_win.wmv</div></div>
<div class="cell" style="left:1339px;top:227px;height:97px"><div class="th2"><svg style="position:absolute;left:0;top:0" width="89" height="67" viewBox="0 0 89 67"><use href="#speakers" transform="translate(44.500 33.500) scale(.273)"/></svg><svg style="position:absolute;right:1px;top:0" width="13" height="13" viewBox="0 0 13 13"><circle cx="6.500" cy="6.500" r="6" fill="#2a2a2a"/><path d="M3 6.500l2.500 3l5-6" fill="none" stroke="#4ad42a" stroke-width="2.200"/></svg></div><div class="lb" style="top:81px">01 - ハッピー.mp3</div></div>
<div class="abs" style="left:1451px;top:227px;width:1px;height:97px;background:#3a3a3a"></div><div class="abs" style="left:891px;top:324px;width:561px;height:1px;background:#333"></div>
<div id="cbot" class="abs"></div>
<svg class="abs" style="left:696px;top:91px" width="200" height="447" viewBox="696 91 200 447">
<defs>
<linearGradient id="gold" x1="0" y1="0" x2="0" y2="1"><stop offset="0" stop-color="#fbe88a"/><stop offset=".5" stop-color="#f0c648"/><stop offset="1" stop-color="#c98a1e"/></linearGradient>
<linearGradient id="gry" x1="0" y1="0" x2="0" y2="1"><stop offset="0" stop-color="#b4b4b4"/><stop offset="1" stop-color="#7a7a7a"/></linearGradient>
</defs>
<!-- media icon -->
<rect x="704" y="99.500" width="20.500" height="15.500" rx="1.500" fill="url(#gold)" stroke="#f8e9a0" stroke-width="1"/>
<rect x="706" y="101.500" width="16.500" height="11.500" fill="#d9a53a" opacity=".6"/>
<rect x="711" y="106" width="18" height="13" rx="1.500" fill="url(#gold)" stroke="#fbeeb0" stroke-width="1"/>
<g fill="#7a2a10"><rect x="713" y="108" width="2" height="2"/><rect x="716.200" y="108" width="2" height="2"/><rect x="719.400" y="108" width="2" height="2"/><rect x="722.600" y="108" width="2" height="2"/><rect x="725.500" y="108" width="2" height="2"/><rect x="713" y="115" width="2" height="2"/><rect x="716.200" y="115" width="2" height="2"/><rect x="719.400" y="115" width="2" height="2"/><rect x="722.600" y="115" width="2" height="2"/><rect x="725.500" y="115" width="2" height="2"/></g>
<rect x="712" y="111" width="16" height="3" fill="#fdf0a8" opacity=".7"/>
<!-- instant project -->
<rect x="704" y="153.500" width="17.500" height="12" rx="1" fill="url(#gry)"/>
<g fill="#2a2a2a"><rect x="706" y="155.500" width="2" height="2"/><rect x="709.200" y="155.500" width="2" height="2"/><rect x="712.400" y="155.500" width="2" height="2"/><rect x="706" y="161.500" width="2" height="2"/><rect x="709.200" y="161.500" width="2" height="2"/><rect x="712.400" y="161.500" width="2" height="2"/><rect x="715.600" y="161.500" width="2" height="2"/><rect x="718.500" y="161.500" width="2" height="2"/></g>
<path d="M721.500 147.500 l1.800 3.800 l4.200 .4 l-3.100 2.900 l.9 4.200 l-3.800 -2.100 l-3.800 2.100 l.9 -4.200 l-3.100 -2.900 l4.200 -.4z" fill="#a8a8a8" stroke="#1d1d1d" stroke-width=".6"/>
<path d="M723.500 157.500 L730 167" stroke="#9a9a9a" stroke-width="2.200" stroke-linecap="round"/>
<!-- AB -->
<rect x="705" y="197.500" width="24" height="17" rx="1.500" fill="#808080" stroke="#9c9c9c" stroke-width="1"/>
<text x="706" y="212" font-family="'Liberation Sans',sans-serif" font-weight="bold" font-size="15.500" fill="#d8d8d8" textLength="22" lengthAdjust="spacingAndGlyphs">AB</text>
<!-- T -->
<text x="705.500" y="264" font-family="'Liberation Serif',serif" font-weight="bold" font-size="25" fill="#9c9c9c" textLength="22" lengthAdjust="spacingAndGlyphs">T</text>
<!-- graphic (flower) -->
<rect x="703.500" y="298.500" width="13.500" height="11" fill="#5a5a5a" stroke="#9a9a9a" stroke-width="1"/>
<g fill="#8e8e8e"><circle cx="719.800" cy="294.500" r="3.600"/><circle cx="725.500" cy="298.500" r="3.600"/><circle cx="723.500" cy="305" r="3.600"/><circle cx="716.200" cy="305" r="3.600"/><circle cx="714.200" cy="298.500" r="3.600"/><circle cx="719.800" cy="300.500" r="4.500"/></g>
<circle cx="719.800" cy="300.500" r="2.300" fill="#606060"/>
<!-- FX -->
<text x="705" y="358" font-family="'Liberation Sans',sans-serif" font-weight="bold" font-size="20" fill="#9a9a9a" textLength="22.500" lengthAdjust="spacingAndGlyphs">FX</text>
<!-- path -->
<path d="M707 394 C707 404 716 398 719 399 C724 400 725 404 725 405" fill="none" stroke="#a0a0a0" stroke-width="1.800"/>
<rect x="704" y="390.500" width="5.500" height="5.500" fill="#8a8a8a" stroke="#b8b8b8" stroke-width=".8"/>
<rect x="722.500" y="402.500" width="5.500" height="5.500" fill="#8a8a8a" stroke="#b8b8b8" stroke-width=".8"/>
<!-- add (+) -->
<path d="M759 102.500 h4.500 v5 h5 v4.500 h-5 v5 h-4.500 v-5 h-5 v-4.500 h5z" fill="#8a8a8a" stroke="#a4a4a4" stroke-width=".6"/>
<!-- browse icon -->
<path d="M753.500 518.500 h15 v11 h-15z" fill="#6a6a6a" stroke="#b0b0b0" stroke-width="1.200"/>
<path d="M761 527 h13 l-6.500 8z" fill="#b4b4b4" stroke="#2c2c2c" stroke-width=".8"/>
</svg>
<svg class="abs" style="left:891px;top:518px" width="22" height="20" viewBox="891 518 22 20"><defs><linearGradient id="cb" x1="0" y1="0" x2="0" y2="1"><stop offset="0" stop-color="#9a9a9a"/><stop offset="1" stop-color="#5e5e5e"/></linearGradient></defs><path d="M891.500 519.500 h9 a9 9 0 0 1 0 18 h-9z" fill="url(#cb)"/><path d="M903.500 523.500 l-5 5 l5 5" fill="none" stroke="#1c1c1c" stroke-width="1.600"/></svg>
<!-- content toolbar icons -->
<svg class="abs" style="left:891px;top:92px" width="588" height="40" viewBox="891 92 588 40">
<defs><linearGradient id="fold" x1="0" y1="0" x2="1" y2="1"><stop offset="0" stop-color="#808080"/><stop offset=".5" stop-color="#4c4c4c"/><stop offset="1" stop-color="#303030"/></linearGradient></defs>
<path d="M909 102 q0 -1.500 1.500 -1.500 h6 l2 2 h9.500 q1.500 0 1.500 1.500 v13 q0 1.500 -1.500 1.500 h-17.500 q-1.500 0 -1.500 -1.500z" fill="url(#fold)" stroke="#222" stroke-width=".8"/>
<path d="M909.500 118 l2.500 -10.500 h18 l-2 10.500z" fill="#4c4c4c" stroke="#7a7a7a" stroke-width=".7"/>
<path d="M982.500 98 v22 M1022.500 98 v22" stroke="#1c1c1c" stroke-width="1"/><path d="M983.500 98 v22 M1023.500 98 v22" stroke="#3a3a3a" stroke-width="1"/>
<!-- film -->
<rect x="954" y="103" width="18" height="12.500" rx="1.200" fill="url(#gold)" stroke="#fbeeb0" stroke-width=".8"/>
<g fill="#7a2a10"><rect x="956" y="104.800" width="2" height="2"/><rect x="959.300" y="104.800" width="2" height="2"/><rect x="962.600" y="104.800" width="2" height="2"/><rect x="965.900" y="104.800" width="2" height="2"/><rect x="969" y="104.800" width="2" height="2"/><rect x="956" y="111.800" width="2" height="2"/><rect x="959.300" y="111.800" width="2" height="2"/><rect x="962.600" y="111.800" width="2" height="2"/><rect x="965.900" y="111.800" width="2" height="2"/><rect x="969" y="111.800" width="2" height="2"/></g>
<!-- photo -->
<rect x="995" y="103.500" width="17" height="12" rx="1" fill="url(#gold)" stroke="#fbeeb0" stroke-width=".8"/>
<circle cx="1003.500" cy="107.500" r="2" fill="#b4701c"/><path d="M996 115 q7.500 -7 15 0z" fill="#a85418"/>
<!-- music -->
<g fill="#f2e060"><ellipse cx="1037.500" cy="115" rx="3.400" ry="2.700"/><ellipse cx="1046" cy="113.500" rx="3.400" ry="2.700"/><path d="M1039 103 l9.500 -2 v12.500 h-1.800 v-8 l-6 1.300 v8.200 h-1.700z"/></g>
</svg>


<!--TIMELINE-->
<div id="tl" class="abs"></div>
<div class="grip abs" style="left:4px;top:546px"></div>
<div id="tbbg" class="abs"></div>
<div id="tlline" class="abs"></div>
<div id="tb1" class="abs"></div>
<div id="tb2" class="abs"></div>
<div id="rulerL" class="abs"></div>
<div id="ruler" class="abs"></div>
<div id="ticks" class="abs"></div>
<div id="ticks2" class="abs"></div>
<div class="rt" style="left:91px">00:00:00.00</div><div class="rt" style="left:211px">00:00:02.00</div><div class="rt" style="left:331px">00:00:04.00</div><div class="rt" style="left:451px">00:00:06.00</div><div class="rt" style="left:571px;z-index:3">00:00:08.00</div><div class="rt" style="left:691px">00:00:10.00</div><div class="rt" style="left:811px">00:00:12.00</div><div class="rt" style="left:931px">00:00:14.00</div><div class="rt" style="left:1051px">00:00:16.00</div><div class="rt" style="left:1171px">00:00:18.00</div><div class="rt" style="left:1291px">00:00:20.00</div><div class="rt" style="left:1411px">00:00:22.00</div>
<div class="mk" style="left:702px"></div><div class="mk" style="left:916px"></div>
<div id="leftcol" class="abs"></div>
<div id="pm" class="abs"></div>
<div id="strip" class="abs"></div>
<div id="hdcol" class="abs"></div>
<div id="tracks" class="abs"></div>
<div class="tdiv" style="top:733px"></div>
<div class="tdiv" style="top:843px"></div>
<div class="tdiv" style="top:900px"></div>
<div class="tdiv" style="top:957px"></div>
<div id="clipth" class="abs"></div>
<div id="clipg" class="abs"><span>freebies_015_win.wmv</span></div>
<div id="aud" class="abs"><span>01 - ハッピー.mp3</span></div>
<div id="ph" class="abs"></div><div class="abs" style="left:570px;top:606px;width:1px;height:6px;background:#8a8a8a"></div>
<div id="bot" class="abs"></div>
<div id="sb" class="abs"></div>
<svg class="abs" style="left:0;top:555px" width="1479" height="472" viewBox="0 555 1479 472">
<defs><linearGradient id="lg" x1="0" y1="0" x2="0" y2="1"><stop offset="0" stop-color="#d0d0d0"/><stop offset="1" stop-color="#8c8c8c"/></linearGradient></defs>
<!-- storyboard -->
<rect x="44" y="563" width="25" height="17" rx="1.500" fill="#dedede"/>
<g fill="#2c2c2c"><rect x="46.500" y="567.500" width="9" height="8"/><rect x="57.500" y="567.500" width="9" height="8"/>
<rect x="46" y="564.300" width="2" height="1.800"/><rect x="50" y="564.300" width="2" height="1.800"/><rect x="54" y="564.300" width="2" height="1.800"/><rect x="58" y="564.300" width="2" height="1.800"/><rect x="62" y="564.300" width="2" height="1.800"/><rect x="65.500" y="564.300" width="2" height="1.800"/>
<rect x="46" y="577" width="2" height="1.800"/><rect x="50" y="577" width="2" height="1.800"/><rect x="54" y="577" width="2" height="1.800"/><rect x="58" y="577" width="2" height="1.800"/><rect x="62" y="577" width="2" height="1.800"/><rect x="65.500" y="577" width="2" height="1.800"/></g>
<!-- timeline view (yellow) -->
<rect x="111.500" y="563" width="24" height="16.500" rx="2" fill="#f4e84a" stroke="#fbf48a" stroke-width=".8"/>
<g fill="#3a3418"><rect x="113.500" y="567.800" width="20" height="2"/><rect x="113.500" y="573.300" width="20" height="2"/><path d="M122 564 h6.500 l-3.250 3.300z"/></g>
<!-- undo -->
<path d="M190.500 564.500 L201 561 L199.500 565 C206 566 209 572 206 577 C203 581.500 195 582 189 575 C194 578.500 200 578.500 202 574 C203.500 570.500 201 568.500 198 568.500 L196.500 572.500 Z" fill="url(#lg)"/>
<!-- redo (disabled) -->
<path d="M 267.5 564.5 L 257 561 L 258.5 565 C 252 566 249 572 252 577 C 255 581.5 263 582 269 575 C 264 578.5 258 578.5 256 574 C 254.5 570.5 257 568.5 260 568.5 L 261.5 572.5 Z" fill="#5a5a5a"/>
<circle cx="317" cy="569" r="8.5" fill="#b4b4b4"/><circle cx="317.00" cy="564.33" r="1.70" fill="#2e2e2e"/><circle cx="321.45" cy="567.56" r="1.70" fill="#2e2e2e"/><circle cx="319.75" cy="572.78" r="1.70" fill="#2e2e2e"/><circle cx="314.25" cy="572.78" r="1.70" fill="#2e2e2e"/><circle cx="312.55" cy="567.56" r="1.70" fill="#2e2e2e"/><circle cx="317" cy="569" r="1.02" fill="#2e2e2e"/><circle cx="327.500" cy="575.500" r="5.200" fill="#b01818" stroke="#5a0a0a" stroke-width=".8"/><circle cx="326.500" cy="574.500" r="2" fill="#d84040"/>
<!-- sound mixer waveform -->
<g stroke="#a4a4a4" stroke-width="1.600" fill="none"><path d="M372 571 h3 l1.500 -6 l2 13 l2 -17 l2 21 l2 -16 l2 11 l1.500 -6 h3"/></g>
<ellipse cx="370" cy="575" rx="3.200" ry="2.500" fill="#a4a4a4"/><path d="M372.500 575 v-11" stroke="#a4a4a4" stroke-width="1.300"/>
<!-- auto music -->
<rect x="422.500" y="565.500" width="22" height="13" fill="#6e6e6e" stroke="#a0a0a0" stroke-width="1"/>
<g fill="#2e2e2e"><rect x="424.500" y="566.800" width="2" height="1.600"/><rect x="428" y="566.800" width="2" height="1.600"/><rect x="438" y="566.800" width="2" height="1.600"/><rect x="441.500" y="566.800" width="2" height="1.600"/><rect x="424.500" y="575.600" width="2" height="1.600"/><rect x="428" y="575.600" width="2" height="1.600"/><rect x="438" y="575.600" width="2" height="1.600"/><rect x="441.500" y="575.600" width="2" height="1.600"/></g>
<path d="M434 582 c-3 0 -3 -3 -.5 -3 M434 582 v-19 c3 -3 5 2 0 6 c-5 4 -5 9 0 9 c4 0 4 -5 0 -5 c-2 0 -2.500 2 -1 3" fill="none" stroke="#c4c4c4" stroke-width="1.500"/>
<!-- 3 circles -->
<circle cx="491" cy="567.500" r="6.300" fill="#5e5e5e"/><circle cx="484" cy="570.500" r="6.300" fill="#7c7c7c"/><circle cx="477.500" cy="573.500" r="6.300" fill="#9a9a9a"/>
<!-- subtitle -->
<rect x="533.500" y="562" width="23" height="17.500" rx="1.500" fill="#b8b8b8" stroke="#d0d0d0" stroke-width=".6"/>
<path d="M536 564.500 h9 v2.500 h-3 v6 h-3 v-6 h-3z" fill="#2c2c2c"/><path d="M546.500 565.500 h8 M546.500 568.500 h8 M546.500 571.500 h8 M536 575 h18.500 M536 577.500 h18.500" stroke="#2c2c2c" stroke-width="1.200"/>
<!-- ruler left icon -->
<rect x="23.500" y="595.500" width="22" height="12" rx="1" fill="#8a8a8a" stroke="#a4a4a4" stroke-width=".6"/>
<g fill="#2c2c2c"><rect x="27" y="597.500" width="13" height="2.300"/><rect x="27" y="600.800" width="13" height="2.300"/><rect x="27" y="604.100" width="13" height="2.300"/><rect x="24.500" y="597" width="1.500" height="1.500"/><rect x="24.500" y="600.500" width="1.500" height="1.500"/><rect x="24.500" y="604" width="1.500" height="1.500"/><rect x="43" y="597" width="1.500" height="1.500"/><rect x="43" y="604" width="1.500" height="1.500"/></g>
<path d="M41 598.500 l3.500 3 l-3.500 3z" fill="#b8b8b8"/>
<!-- +/- -->
<g fill="#e6e6e6"><path d="M52.500 613.500 h2 v2.300 h2.300 v2 h-2.300 v2.300 h-2 v-2.300 h-2.300 v-2 h2.300z"/><rect x="65" y="615.800" width="6.500" height="2"/><path d="M77 615.500 h7 l-3.500 4z" fill="#c8c8c8"/></g>
<path d="M59 620.500 l5 -7.500" stroke="#e6e6e6" stroke-width="1.300"/>
<circle cx="63.5" cy="675.5" r="6.5" fill="#8a8a8a"/><circle cx="63.50" cy="671.92" r="1.30" fill="#343434"/><circle cx="66.90" cy="674.40" r="1.30" fill="#343434"/><circle cx="65.60" cy="678.39" r="1.30" fill="#343434"/><circle cx="61.40" cy="678.39" r="1.30" fill="#343434"/><circle cx="60.10" cy="674.40" r="1.30" fill="#343434"/><circle cx="63.5" cy="675.5" r="0.78" fill="#343434"/><rect x="69.2" y="675.5" width="12.500" height="10.500" rx="1.500" fill="#8c8c8c" stroke="#a2a2a2" stroke-width=".6"/><ellipse cx="75.45" cy="680.9" rx="4.300" ry="2.700" fill="#2e2e2e"/><circle cx="75.45" cy="680.9" r="1.700" fill="#8c8c8c"/><path d="M72.7 684.0 l6 -6.500" stroke="#2e2e2e" stroke-width=".8"/><path d="M56.500 781 a7 7 0 0 0 -3 8" fill="none" stroke="#8a8a8a" stroke-width="1"/><circle cx="63.5" cy="787.3" r="6.5" fill="#8a8a8a"/><circle cx="63.50" cy="783.72" r="1.30" fill="#343434"/><circle cx="66.90" cy="786.20" r="1.30" fill="#343434"/><circle cx="65.60" cy="790.19" r="1.30" fill="#343434"/><circle cx="61.40" cy="790.19" r="1.30" fill="#343434"/><circle cx="60.10" cy="786.20" r="1.30" fill="#343434"/><circle cx="63.5" cy="787.3" r="0.78" fill="#343434"/><rect x="69.5" y="787.3" width="12.500" height="10.500" rx="1.500" fill="#8c8c8c" stroke="#a2a2a2" stroke-width=".6"/><ellipse cx="75.75" cy="792.6999999999999" rx="4.300" ry="2.700" fill="#2e2e2e"/><circle cx="75.75" cy="792.6999999999999" r="1.700" fill="#8c8c8c"/><path d="M73.0 795.8 l6 -6.500" stroke="#2e2e2e" stroke-width=".8"/><text x="52.500" y="798" font-family="'Liberation Sans',sans-serif" font-size="7" fill="#8a8a8a">1</text><text x="53" y="877" font-family="'Liberation Sans',sans-serif" font-size="7" fill="#8a8a8a">1</text><text x="56.500" y="877" font-family="'Liberation Serif',serif" font-weight="bold" font-size="15.500" fill="#9a9a9a" textLength="12" lengthAdjust="spacingAndGlyphs">T</text><rect x="68.7" y="867.3" width="12.500" height="10.500" rx="1.500" fill="#8c8c8c" stroke="#a2a2a2" stroke-width=".6"/><ellipse cx="74.95" cy="872.6999999999999" rx="4.300" ry="2.700" fill="#2e2e2e"/><circle cx="74.95" cy="872.6999999999999" r="1.700" fill="#8c8c8c"/><path d="M72.2 875.8 l6 -6.500" stroke="#2e2e2e" stroke-width=".8"/><circle cx="60" cy="926" r="3.300" fill="#9a9a9a"/><path d="M62 928.500 l4 4.500 q1.500 1.500 3.500 1.500" fill="none" stroke="#9a9a9a" stroke-width="1.800"/><rect x="68.7" y="923.8" width="12.500" height="10.500" rx="1.500" fill="#8c8c8c" stroke="#a2a2a2" stroke-width=".6"/><ellipse cx="74.95" cy="929.1999999999999" rx="4.300" ry="2.700" fill="#2e2e2e"/><circle cx="74.95" cy="929.1999999999999" r="1.700" fill="#8c8c8c"/><path d="M72.2 932.3 l6 -6.500" stroke="#2e2e2e" stroke-width=".8"/><text x="52.500" y="990" font-family="'Liberation Sans',sans-serif" font-size="7.500" fill="#9a9a9a">1</text><g fill="#9a9a9a"><ellipse cx="59" cy="987.500" rx="2" ry="1.600"/><ellipse cx="65" cy="986.500" rx="2" ry="1.600"/><path d="M60 980.500 l6.300 -1.300 v7.300 h-1.100 v-4.800 l-4.100 .9 v5 h-1.100z"/></g><rect x="68.7" y="980.8" width="12.500" height="10.500" rx="1.500" fill="#8c8c8c" stroke="#a2a2a2" stroke-width=".6"/><ellipse cx="74.95" cy="986.1999999999999" rx="4.300" ry="2.700" fill="#2e2e2e"/><circle cx="74.95" cy="986.1999999999999" r="1.700" fill="#8c8c8c"/><path d="M72.2 989.3 l6 -6.500" stroke="#2e2e2e" stroke-width=".8"/><path d="M21.0 698 v-2.500 a2.600 2.600 0 0 1 5.200 0 v.8" fill="none" stroke="#d0d0d0" stroke-width="1.500"/><rect x="23.0" y="698" width="6.500" height="5.500" fill="#d0d0d0"/><g fill="#c8c8c8"><rect x="31" y="693" width="1.800" height="11"/><rect x="34" y="693" width="7.500" height="2.500"/><rect x="34" y="697.200" width="7.500" height="2.500"/><rect x="34" y="701.400" width="7.500" height="2.500"/></g><path d="M24.500 722.500 h11 l-5.500 5.500z" fill="#e8e8e8"/><path d="M24.5 787 v-2.500 a2.600 2.600 0 0 1 5.200 0 v.8" fill="none" stroke="#5c5c5c" stroke-width="1.500"/><rect x="26.5" y="787" width="6.500" height="5.500" fill="#5c5c5c"/><path d="M24.5 871 v-2.500 a2.600 2.600 0 0 1 5.200 0 v.8" fill="none" stroke="#5c5c5c" stroke-width="1.500"/><rect x="26.5" y="871" width="6.500" height="5.500" fill="#5c5c5c"/><path d="M24.5 928 v-2.500 a2.600 2.600 0 0 1 5.200 0 v.8" fill="none" stroke="#5c5c5c" stroke-width="1.500"/><rect x="26.5" y="928" width="6.500" height="5.500" fill="#5c5c5c"/><path d="M24.5 985 v-2.500 a2.600 2.600 0 0 1 5.200 0 v.8" fill="none" stroke="#5c5c5c" stroke-width="1.500"/><rect x="26.5" y="985" width="6.500" height="5.500" fill="#5c5c5c"/><rect x="578" y="979.500" width="11.500" height="12" fill="#0b2a55"/><g fill="#f0f0f0"><ellipse cx="582" cy="988" rx="1.600" ry="1.300"/><ellipse cx="586.300" cy="987.200" rx="1.600" ry="1.300"/><path d="M582.800 982.800 l4.600 -1 v5.400 h-.9 v-3.500 l-2.800 .6 v3.700 h-.9z"/></g><g fill="#c89a50"><rect x="572.500" y="977" width="3" height="2.500"/><rect x="572.500" y="981.500" width="3" height="2.500"/><rect x="572.500" y="986" width="3" height="2.500"/><rect x="572.500" y="990.500" width="3" height="2.500"/><rect x="572.500" y="995" width="3" height="2.500"/></g><path d="M564.500 592.500 h11.500 v8 l-5.750 6 l-5.750 -6z" fill="#f0f0f0" stroke="#b0b0b0" stroke-width=".6"/><path d="M32 1023.500 h7 l-3.500 3.500z M62 1022 v5 h-6z M74 1022 v5 h6z" fill="#8a8a8a"/></svg>


<!--ANNOT-->
<svg class="abs" style="left:0;top:0;pointer-events:none" width="1479" height="1027" viewBox="0 0 1479 1027">
<polygon points="1315.500,160.300 1339.100,148 1371.200,202.100 1384,196.700 1376.600,238.500 1336.400,224.600 1347.100,217.600" fill="#ff00ff"/>
<polygon points="1348.100,349.800 1365.700,370.500 905.800,754.600 913.900,764.700 667.800,935.600 880.500,722.900 889.400,732.500" fill="#ff00ff"/>
<circle cx="1152.100" cy="109" r="27.100" fill="none" stroke="#ff00ff" stroke-width="3.800"/><circle cx="942.200" cy="824.300" r="27.100" fill="none" stroke="#ff00ff" stroke-width="3.800"/>
</svg>
<div class="circ" style="left:1126.600px;top:83.500px"><span>①</span></div>
<div class="ann" style="left:1181px;top:72px;transform-origin:0 13px;transform:scale(1.04,.945)">クリック</div>
<div class="circ" style="left:916.700px;top:798.800px"><span>②</span></div>
<div class="ann" style="left:972px;top:785.500px;transform-origin:0 50%;transform:scaleX(1.037)">引っ張ってくる</div>
<div class="ann" style="left:905.800px;top:857.500px;transform-origin:49.500px 50%;transform:scaleX(1.45)">（</div>
<div class="ann" style="left:970px;top:857.500px;transform-origin:0 50%;transform:scaleX(1.05)">ドラッグ</div>
<div class="ann" style="left:1228px;top:857.500px;transform-origin:10.500px 50%;transform:scaleX(1.45)">）</div>

</div>
</body>
</html>
